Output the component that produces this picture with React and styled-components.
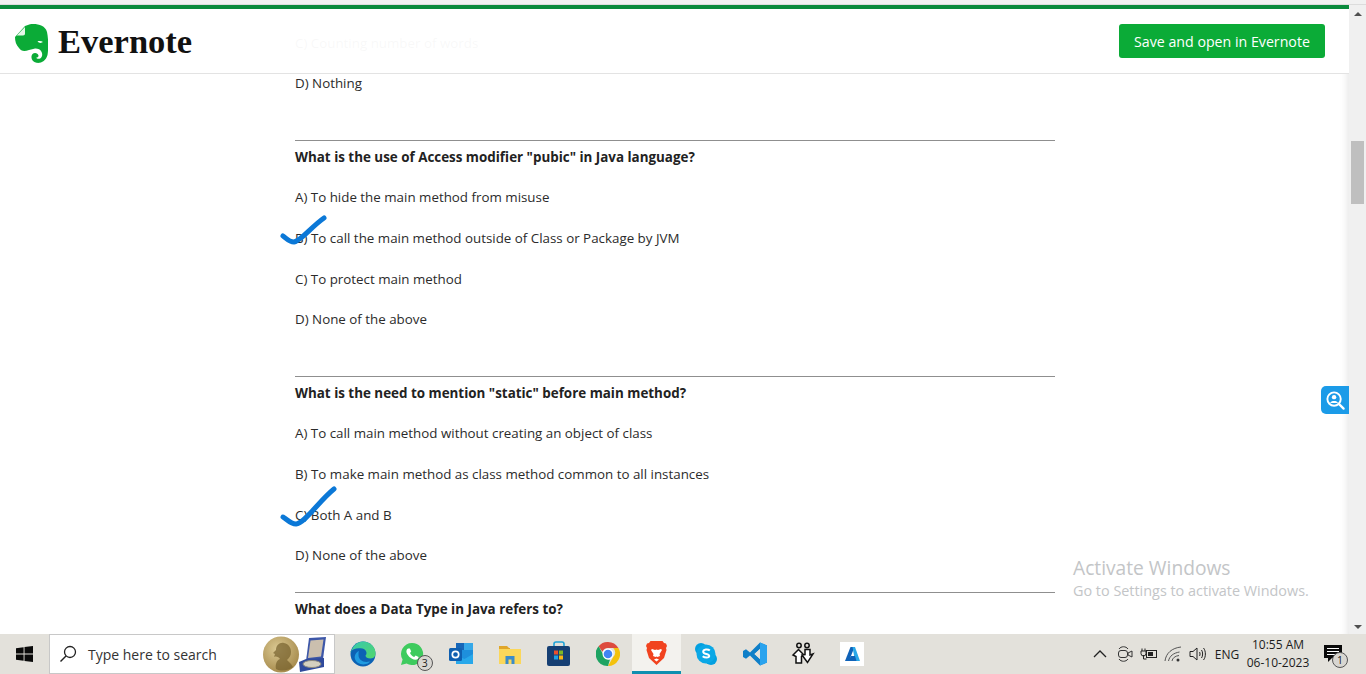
import styled, { createGlobalStyle } from 'styled-components';

const Global = createGlobalStyle`
  html, body { margin: 0; height: 100%; overflow: hidden; background: #fff; }
  * { box-sizing: border-box; }
`;

const Screen = styled.div`
  width: 1366px;
  height: 674px;
  display: flex;
  flex-direction: column;
  font-family: "Open Sans", "Noto Sans", sans-serif;
`;

const TopStrip = styled.div`
  height: 5px;
  flex: none;
  background: #f1f1f1;
  border-bottom: 1px solid #dcdcdc;
`;

const Main = styled.div`
  position: relative;
  flex: 1;
  display: flex;
  min-height: 0;
  overflow: hidden;
`;

const Viewport = styled.div`
  flex: 1;
  min-width: 0;
  position: relative;
  overflow: hidden;
  background: #fff;
  padding: 17.5px 0 0 295px;
  box-shadow: inset -9px 0 8px -8px rgba(0, 0, 0, 0.12);
`;

const Header = styled.header`
  position: absolute;
  top: 0;
  left: 0;
  right: 0;
  height: 69px;
  display: flex;
  align-items: center;
  justify-content: space-between;
  padding: 0 24px 0 15px;
  background: rgba(255, 255, 255, 0.97);
  border-top: 4px solid #0a8a3c;
  border-bottom: 1px solid #e3e3e3;
`;

const Brand = styled.div`
  display: flex;
  align-items: center;
  gap: 10px;
`;

const Wordmark = styled.span`
  font-family: "Liberation Serif", serif;
  font-weight: 700;
  font-size: 34.5px;
  line-height: 40px;
  color: #111;
`;

const SaveButton = styled.button`
  width: 206px;
  height: 34px;
  border: 0;
  border-radius: 3px;
  padding: 0;
  background: #0bab37;
  color: #fff;
  font-family: inherit;
  font-size: 14.2px;
`;

const Article = styled.main`
  width: 760px;
  color: #2b2b2b;
  font-size: 13.35px;
`;

const Option = styled.p`
  position: relative;
  margin: 0;
  height: 40.6px;
  line-height: 40.6px;
  white-space: nowrap;
`;

const Question = styled.section`
  border-top: 1px solid #8f8f8f;
  margin-top: ${({ $gap }) => $gap}px;
`;

const Heading = styled.h3`
  margin: 0;
  height: 36.7px;
  line-height: 32px;
  font-size: 13.4px;
  font-weight: 700;
  color: #222;
  white-space: nowrap;
`;

const Tick = styled.svg`
  position: absolute;
  left: -16px;
  top: ${({ $top }) => $top}px;
  overflow: visible;
`;

const ScrollBar = styled.div`
  position: relative;
  flex: none;
  width: 17px;
  background: #f0f0f0;
`;

const ScrollArrow = styled.span`
  position: absolute;
  left: 5px;
  width: 0;
  height: 0;
  border-left: 4px solid transparent;
  border-right: 4px solid transparent;
  ${({ $down }) =>
    $down
      ? 'bottom: 5px; border-top: 4px solid #505050;'
      : 'top: 7px; border-bottom: 4px solid #505050;'}
`;

const ScrollThumb = styled.div`
  position: absolute;
  left: 2px;
  top: 136px;
  width: 13px;
  height: 63px;
  background: #bfbfbf;
`;

const LensTab = styled.div`
  position: absolute;
  right: 17px;
  top: 381px;
  width: 28px;
  height: 28px;
  display: flex;
  align-items: center;
  justify-content: center;
  background: #1b9be8;
  border-radius: 5px 0 0 5px;
`;

const Watermark = styled.div`
  position: absolute;
  left: 1073px;
  top: 550px;
  color: #c3c5c7;
  pointer-events: none;
`;

const WatermarkTitle = styled.div`
  font-size: 19.2px;
  line-height: 26px;
`;

const WatermarkText = styled.div`
  font-size: 14.4px;
  line-height: 20px;
`;

const Taskbar = styled.footer`
  position: relative;
  flex: none;
  height: 40px;
  display: flex;
  align-items: stretch;
  background: #e3e1db;
  color: #1c1c1c;
`;

const StartButton = styled.div`
  width: 49px;
  display: flex;
  align-items: center;
  justify-content: center;
`;

const SearchBox = styled.div`
  width: 286px;
  display: flex;
  align-items: center;
  background: #fff;
  border: 1px solid #c8c8c8;
  padding: 0 7px 0 9px;
`;

const SearchText = styled.span`
  flex: 1;
  margin-left: 11px;
  font-size: 14px;
  color: #333;
`;

const Apps = styled.div`
  display: flex;
  margin-left: 4px;
`;

const AppSlot = styled.div`
  position: relative;
  width: 48.9px;
  display: flex;
  align-items: center;
  justify-content: center;
  ${({ $active }) =>
    $active && 'background: #f3f2ee; border-bottom: 3px solid #0f8fb0;'}
`;

const CountBadge = styled.span`
  position: absolute;
  right: ${({ $right }) => $right}px;
  bottom: ${({ $bottom }) => $bottom}px;
  width: 16px;
  height: 16px;
  border-radius: 50%;
  border: 1px solid #555;
  background: #d8d6d1;
  font-size: 10.5px;
  line-height: 14px;
  text-align: center;
  color: #222;
`;

const Tray = styled.div`
  margin-left: auto;
  display: flex;
  align-items: center;
  padding-right: 21px;
`;

const TrayIcon = styled.div`
  width: 24.4px;
  display: flex;
  justify-content: center;
`;

const Lang = styled.span`
  width: 34px;
  text-align: center;
  font-size: 12px;
`;

const Clock = styled.div`
  width: 68px;
  text-align: center;
  font-size: 12px;
  line-height: 18px;
`;

const Notify = styled.div`
  position: relative;
  width: 24px;
  margin-left: 9px;
  display: flex;
  justify-content: center;
`;

const ElephantLogo = () => (
  <svg width="33" height="46" viewBox="0 -6 33 46">
    <path fill="#0bab37" d="M10 2 15 .3C22-.5 30 1 32 8c1.500 7 1.500 17 .5 23C31 37 26 39.500 21.500 38.800 17 38 15 33 17.500 30c2-2 5.500-1 6 1.500.3 1.500-1.500 2.500-2.500 2 1 2 5 2 6-1.500 1-4-2-8-7-7.500l-6 1.500C9 28 6 27 4 24 1 21 0 17 0 13z" />
    <path fill="#e6f6e9" d="M1.800 11.500 10 3v6.500c0 1.300-.7 2-2 2z" />
    <path fill="#fff" d="M22.500 17.500c1.500-.8 4-.6 5.500.6-1.800 1.300-4.200 1-5.500-.6z" />
  </svg>
);

const CheckMark = ({ width, height, d, top }) => (
  <Tick $top={top} width={width} height={height}>
    <path d={d} fill="none" stroke="#0b78d7" strokeWidth="5" strokeLinecap="round" strokeLinejoin="round" />
  </Tick>
);

const LensIcon = () => (
  <svg width="21" height="21" viewBox="0 0 22 22">
    <circle cx="9.500" cy="9.500" r="7" fill="none" stroke="#fff" strokeWidth="2" />
    <circle cx="9.500" cy="7.500" r="2.300" fill="#fff" />
    <path d="M5.500 13.500c.5-2.500 7.500-2.500 8 0z" fill="#fff" />
    <path d="M14.500 14.500l5 5" stroke="#fff" strokeWidth="2.400" strokeLinecap="round" />
  </svg>
);

const WindowsLogo = () => (
  <svg width="17" height="16" viewBox="0 0 17 16">
    <path fill="#0a0a0a" d="M0 2.300 7.600 1.200v6.300H0zM8.500 1.100 17 0v7.500H8.500zM0 8.500h7.600v6.300L0 13.700zM8.500 8.500H17V16l-8.500-1.100z" />
  </svg>
);

const SearchGlass = () => (
  <svg width="18" height="18" viewBox="0 0 18 18">
    <circle cx="11" cy="7" r="5.500" fill="none" stroke="#222" strokeWidth="1.300" />
    <path d="M7 11 1.500 16.500" stroke="#222" strokeWidth="1.400" />
  </svg>
);

const MedalArt = () => (
  <svg width="64" height="37" viewBox="0 0 64 37">
    <defs>
      <radialGradient id="gold" cx="40%" cy="35%" r="70%">
        <stop offset="0" stopColor="#dcca94" />
        <stop offset="1" stopColor="#a5894a" />
      </radialGradient>
    </defs>
    <circle cx="18" cy="18.500" r="18" fill="url(#gold)" />
    <path d="M13 33c-1-5 1-9 4-10-1-2-4-3-6-2l1-3-2-1 3-3c0-5 4-8 8-7 5 1 7 5 7 9 0 4-2 6-4 8l4 4 2 3c-3 3-11 5-17 2z" fill="#75602c" opacity=".7" />
    <path d="M46 2 63 1l-3 22-17 2z" fill="#3d57a8" />
    <path d="M47.500 4.500 60.500 3.500 58 20.500l-13 1.500z" fill="#cbbfae" />
    <path d="M36 26l7-3 18-1v9l-24 5z" fill="#2f4a9c" />
    <ellipse cx="49" cy="28" rx="9" ry="3.500" fill="#d5d0c0" stroke="#8d8a80" />
  </svg>
);

const EdgeIcon = () => (
  <svg width="26" height="26" viewBox="0 0 26 26">
    <defs>
      <linearGradient id="edgeA" x1="0" y1="0" x2="1" y2="1">
        <stop offset="0" stopColor="#36c8b0" />
        <stop offset="1" stopColor="#52d66b" />
      </linearGradient>
    </defs>
    <circle cx="13" cy="13" r="12.500" fill="#0c62b4" />
    <path d="M1 11C3 4 8 .5 13 .5c7 0 12.500 5 12.500 12 0 2-1 5-5 5-3 0-5-1-5-3 2-2 1-6-3-7-5-1-10 0-12.500 3.500z" fill="url(#edgeA)" />
    <path d="M8.500 14c0 5 5 8 11 6.500 1-.2 0 1-1 1.500-5 3-12 1-13.500-4-1-3 1-7 4-8-.5 1-.5 2.500-.5 4z" fill="#1f9be0" />
  </svg>
);

const WhatsappIcon = () => (
  <svg width="24" height="24" viewBox="0 0 24 24">
    <path fill="#3ecb5e" d="M12 1a11 11 0 0 0-9.400 16.600L1 23l5.600-1.500A11 11 0 1 0 12 1z" />
    <path fill="#fff" d="M8.200 6.500c-.6 0-1.800 1-1.800 3 0 3 4.500 8 9 8.300 2 0 3.200-1.500 3.200-2.800l-3-1.600-1.400 1.500c-1.500-.5-3.500-2.500-4.200-4l1.200-1.400-1.300-3z" />
  </svg>
);

const OutlookIcon = () => (
  <svg width="25" height="24" viewBox="0 0 25 24">
    <rect x="7" y="1" width="17" height="21" rx="1" fill="#1e8fdc" />
    <rect x="7" y="1" width="8" height="7" fill="#1666b8" />
    <rect x="15" y="1" width="9" height="7" fill="#36a8e8" />
    <path d="M7 13l8.500 4L24 12v10H7z" fill="#28a8ea" />
    <rect x="0" y="6" width="13" height="13" rx="1.500" fill="#0f5fb0" />
    <circle cx="6.500" cy="12.500" r="3.200" fill="none" stroke="#fff" strokeWidth="1.700" />
  </svg>
);

const FolderIcon = () => (
  <svg width="22" height="20" viewBox="0 0 22 20">
    <path d="M0 2h8l2 2h1v2H0z" fill="#e0a62a" />
    <path d="M0 5h22v15H0z" fill="#fbd75a" />
    <path d="M6.500 12h9v8h-3v-4.500h-3V20h-3z" fill="#3b8bc9" />
  </svg>
);

const StoreIcon = () => (
  <svg width="24" height="26" viewBox="0 0 24 26">
    <path d="M7 6V3c0-1.500 1-2 2-2h6c1 0 2 .5 2 2v3" fill="none" stroke="#1fa3d8" strokeWidth="1.600" />
    <rect y="5" width="23" height="20" rx="2" fill="#163f73" />
    <rect x="7" y="9.500" width="4" height="4" fill="#e8502e" />
    <rect x="12" y="9.500" width="4" height="4" fill="#7eb824" />
    <rect x="7" y="14.500" width="4" height="4" fill="#1da1e6" />
    <rect x="12" y="14.500" width="4" height="4" fill="#f9b712" />
  </svg>
);

const ChromeIcon = () => (
  <svg width="24" height="24" viewBox="0 0 24 24">
    <path d="M12 0a12 12 0 0 1 10.400 6H12a6 6 0 0 0-5.600 3.800L2.600 4.200A12 12 0 0 1 12 0z" fill="#dd4b3e" />
    <path d="M22.400 6A12 12 0 0 1 12 24l5.200-9a6 6 0 0 0 0-9z" fill="#f4c20d" />
    <path d="M12 24A12 12 0 0 1 2.600 4.200L7 12a6 6 0 0 0 7 5.600z" fill="#1ea362" />
    <circle cx="12" cy="12" r="5.500" fill="#fff" />
    <circle cx="12" cy="12" r="4.300" fill="#4285f4" />
  </svg>
);

const BraveIcon = () => (
  <svg width="21" height="24" viewBox="0 0 21 24">
    <path d="M4.500 0h12L18 2l2 .500L21 5l-1 2 .5 2L18 17l-7.500 7L3 17 .5 9 1 7 0 5l1-2.500L3 2z" fill="#f1431f" />
    <path d="M6 8l3 1 1.500-.5L12 9l3-1 1 1-2.500 4 .5 2-2.500 1-1-.5-1 .5L7 15l.5-2L5 9zM8 18.500l2.500-1 2.500 1-2.500 2z" fill="#fff" />
  </svg>
);

const SkypeIcon = () => (
  <svg width="22" height="22" viewBox="0 0 22 22">
    <circle cx="6" cy="6" r="6" fill="#03a0e0" />
    <circle cx="16" cy="16" r="6" fill="#03a0e0" />
    <circle cx="11" cy="11" r="9.500" fill="#0ba8e6" />
    <path d="M14.800 7.500c-1.800-1.700-6.600-1.500-6.600 1.300 0 2.900 6 1.700 6 4.200 0 2-4.500 2-6.500.2" fill="none" stroke="#fff" strokeWidth="2" />
  </svg>
);

const VsCodeIcon = () => (
  <svg width="24" height="24" viewBox="0 0 24 24">
    <path d="M17 .5 24 3.500v17L17 23.500 7 13.500l-4 3.200L0 15V9l3-1.700 4 3.200zM17 7l-5.500 5 5.500 5z" fill="#0f7fc8" />
    <path d="M17 .5 24 3.500v17L17 23.500z" fill="#2aa3ee" />
    <path d="M17 7l-5.500 5 5.500 5z" fill="#e3e1db" />
  </svg>
);

const PeopleIcon = () => (
  <svg width="24" height="24" viewBox="0 0 24 24" fill="#fff" stroke="#111" strokeWidth="1.500">
    <circle cx="8" cy="3.500" r="2.200" fill="none" />
    <circle cx="16" cy="3.500" r="2.200" fill="none" />
    <path d="M7.500 7.500 13 13l-2.500 1.500V21H5v-6.500L2 13z" />
    <path d="M14 7.500h5V13l3-1-5.500 8.500L11 13l3-.5z" />
  </svg>
);

const AzureTile = () => (
  <svg width="24" height="24" viewBox="0 0 24 24">
    <rect width="24" height="24" fill="#fff" />
    <path d="M10.500 5h4L9 19H5z" fill="#0f62b8" />
    <path d="M12.500 5h2.500l5 14h-5z" fill="#2aa8e8" />
    <path d="M11 14h4l1.500 5H8z" fill="#0f62b8" />
  </svg>
);

const TrayChevron = () => (
  <svg width="14" height="8" viewBox="0 0 14 8"><path d="M1 7l6-6 6 6" fill="none" stroke="#222" strokeWidth="1.300" /></svg>
);

const MeetIcon = () => (
  <svg width="16" height="18" viewBox="0 0 16 18" fill="none" stroke="#333" strokeWidth="1">
    <path d="M2 4c2-3 7-3 9 0M2 14c2 3 7 3 9 0" />
    <rect x="1.500" y="5.500" width="9" height="7" rx="2.500" />
    <path d="M11 8l4-2v6l-4-2z" />
  </svg>
);

const PowerIcon = () => (
  <svg width="18" height="14" viewBox="0 0 18 14">
    <rect x="6.500" y="3.500" width="10" height="7" fill="none" stroke="#222" />
    <rect x="8" y="5" width="5" height="4" fill="#222" />
    <path d="M1 4h5v2.500a2 2 0 0 1-5 0zM2 1.500V4M5 1.500V4M3.500 8v4h3" fill="none" stroke="#222" />
  </svg>
);

const WifiIcon = () => (
  <svg width="18" height="16" viewBox="0 0 18 16" fill="none" stroke="#555" strokeWidth="1">
    <path d="M1 15C2 7 8 2 17 1M4.500 15c1-5 5-8 11-9M8 15c.5-3 3-5 7-5.500" />
    <circle cx="14" cy="14" r="1.500" fill="#333" stroke="none" />
  </svg>
);

const SoundIcon = () => (
  <svg width="18" height="16" viewBox="0 0 18 16" fill="none" stroke="#222" strokeWidth="1">
    <path d="M1 5.500h3L8 2v12l-4-3.500H1zM10.500 6c.7 1 .7 3 0 4M12.500 4c1.500 2 1.500 6 0 8M14.500 2c2.500 3 2.500 9 0 12" />
  </svg>
);

const NotifyIcon = () => (
  <svg width="18" height="18" viewBox="0 0 18 18">
    <path d="M0 0h18v13H8l-4 4v-4H0z" fill="#0a0a0a" />
    <path d="M3 3.500h12M3 6.500h12M3 9.500h8" stroke="#fff" strokeWidth="1" />
  </svg>
);

const appIcons = [
  { id: 'edge', Icon: EdgeIcon },
  { id: 'whatsapp', Icon: WhatsappIcon, badge: 3 },
  { id: 'outlook', Icon: OutlookIcon },
  { id: 'files', Icon: FolderIcon },
  { id: 'store', Icon: StoreIcon },
  { id: 'chrome', Icon: ChromeIcon },
  { id: 'brave', Icon: BraveIcon, active: true },
  { id: 'skype', Icon: SkypeIcon },
  { id: 'vscode', Icon: VsCodeIcon },
  { id: 'people', Icon: PeopleIcon },
  { id: 'azure', Icon: AzureTile },
];

const questions = [
  {
    title: 'What is the use of Access modifier "pubic" in Java language?',
    options: [
      'A) To hide the main method from misuse',
      'B) To call the main method outside of Class or Package by JVM',
      'C) To protect main method',
      'D) None of the above',
    ],
    tick: 1,
    gap: 36,
    tickProps: { width: 50, height: 30, top: -3, d: 'M4 21C7 23 10 27 15 27 22 26 32 12 45 3' },
  },
  {
    title: 'What is the need to mention "static" before main method?',
    options: [
      'A) To call main method without creating an object of class',
      'B) To make main method as class method common to all instances',
      'C) Both A and B',
      'D) None of the above',
    ],
    tick: 2,
    gap: 36,
    tickProps: { width: 60, height: 46, top: -14, d: 'M4 36C8 38 11 43 17 43 26 42 40 20 55 8' },
  },
  {
    title: 'What does a Data Type in Java refers to?',
    options: [],
    gap: 16.6,
  },
];

export default function App() {
  return (
    <Screen>
      <Global />
      <TopStrip />
      <Main>
        <Viewport>
          <Article>
            <Option>C) Counting number of words</Option>
            <Option>D) Nothing</Option>
            {questions.map((q) => (
              <Question key={q.title} $gap={q.gap}>
                <Heading>{q.title}</Heading>
                {q.options.map((text, i) => (
                  <Option key={text}>
                    {q.tick === i && <CheckMark {...q.tickProps} />}
                    {text}
                  </Option>
                ))}
              </Question>
            ))}
          </Article>
          <Header>
            <Brand>
              <ElephantLogo />
              <Wordmark>Evernote</Wordmark>
            </Brand>
            <SaveButton>Save and open in Evernote</SaveButton>
          </Header>
        </Viewport>
        <ScrollBar>
          <ScrollArrow />
          <ScrollThumb />
          <ScrollArrow $down />
        </ScrollBar>
        <LensTab>
          <LensIcon />
        </LensTab>
        <Watermark>
          <WatermarkTitle>Activate Windows</WatermarkTitle>
          <WatermarkText>Go to Settings to activate Windows.</WatermarkText>
        </Watermark>
      </Main>
      <Taskbar>
        <StartButton>
          <WindowsLogo />
        </StartButton>
        <SearchBox>
          <SearchGlass />
          <SearchText>Type here to search</SearchText>
          <MedalArt />
        </SearchBox>
        <Apps>
          {appIcons.map(({ id, Icon, badge, active }) => (
            <AppSlot key={id} $active={active}>
              <Icon />
              {badge && <CountBadge $right={4} $bottom={3}>{badge}</CountBadge>}
            </AppSlot>
          ))}
        </Apps>
        <Tray>
          <TrayIcon><TrayChevron /></TrayIcon>
          <TrayIcon><MeetIcon /></TrayIcon>
          <TrayIcon><PowerIcon /></TrayIcon>
          <TrayIcon><WifiIcon /></TrayIcon>
          <TrayIcon><SoundIcon /></TrayIcon>
          <Lang>ENG</Lang>
          <Clock>
            <div>10:55 AM</div>
            <div>06-10-2023</div>
          </Clock>
          <Notify>
            <NotifyIcon />
            <CountBadge $right={-3} $bottom={-5}>1</CountBadge>
          </Notify>
        </Tray>
      </Taskbar>
    </Screen>
  );
}
